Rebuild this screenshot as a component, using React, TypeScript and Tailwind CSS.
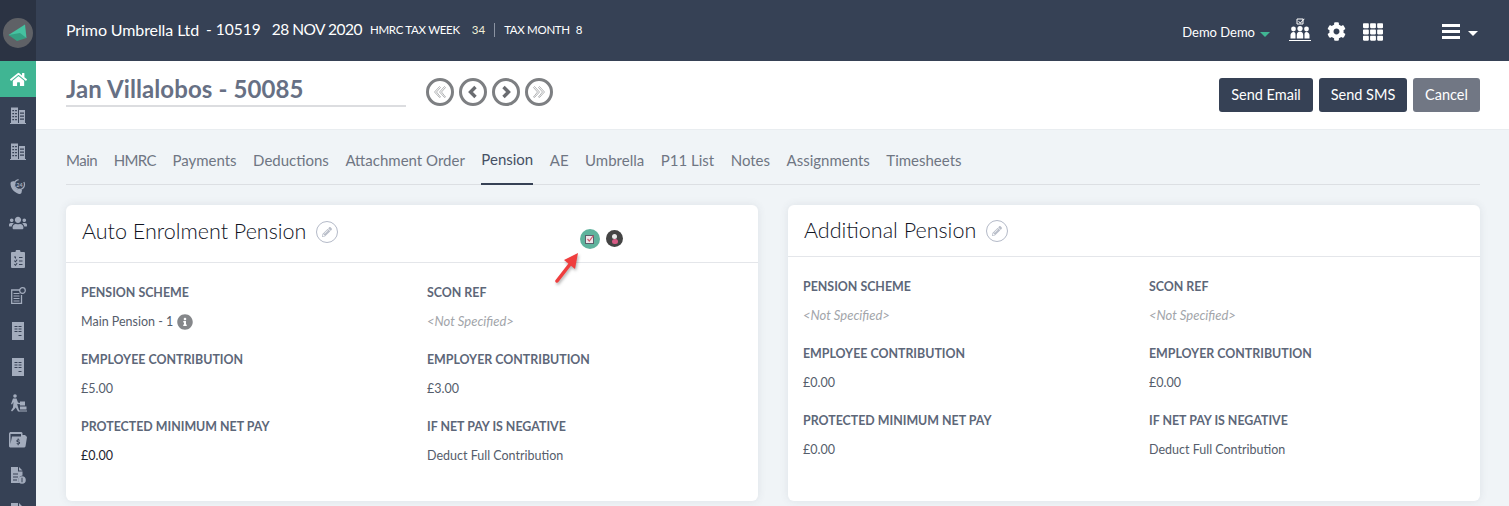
import React from "react";
import { FaHome, FaUsers, FaCog, FaTh, FaInfoCircle, FaPencilAlt } from "react-icons/fa";

const Building = () => (
  <svg width="16" height="18" viewBox="0 0 16 18" fill="#a3acbd">
    <path d="M0 17h16v1H0z" />
    <path fillRule="evenodd" d="M1 1.500h7V17H1zM2.300 4v1.300h1.800V4zm2.800 0v1.300h1.800V4zM2.300 7v1.300h1.800V7zm2.800 0v1.300h1.800V7zM2.300 10v1.300h1.800V10zm2.800 0v1.300h1.800V10zM2.300 13v1.300h1.800V13zm2.800 0v1.300h1.800V13z" />
    <path fillRule="evenodd" d="M9 4h6v13H9zM10 6.500v1.300h4V6.500zM10 9.500v1.300h4V9.500zM10 12.500v1.300h4v-1.300z" />
  </svg>
);
const Phone24 = () => (
  <svg width="18" height="18" viewBox="0 0 18 18" fill="none">
    <path d="M3 3.500 5.500 3l1.200 3-1.500 1.200c.5 2 1.800 3.600 3.600 4.600L10.300 10.500l2.700 1.500-.5 2.800c-.3 1-1.500 1.400-2.500 1.100C5 14.500 1.500 10.300 1.500 5.500c0-1 .6-1.800 1.500-2z" fill="#a3acbd" />
    <circle cx="10.500" cy="6.500" r="5" stroke="#a3acbd" strokeWidth="1.200" strokeDasharray="22 6" />
    <text x="10.500" y="8.500" fontSize="5.500" fontWeight="700" textAnchor="middle" fill="#a3acbd" fontFamily="Lato">24</text>
  </svg>
);
const Clipboard = () => (
  <svg width="14" height="18" viewBox="0 0 14 18" fill="#a3acbd">
    <path fillRule="evenodd" d="M1 2h3.500a2.500 2.500 0 0 1 5 0H13a1 1 0 0 1 1 1v14a1 1 0 0 1-1 1H1a1 1 0 0 1-1-1V3a1 1 0 0 1 1-1zM3 6.500v1h1v1h1V6.500zm5 .5v1h3.500V7zM3 11l1.500 1.500L6.500 10l-.7-.7L4.500 11l-.8-.7zM8 10.500v1h3.500v-1zM3 14.500l1.500 1.500 2-2.500-.7-.7-1.300 1.700-.8-.7zM8 14v1h3.500v-1z" />
  </svg>
);
const DocCoin = () => (
  <svg width="15" height="17" viewBox="0 0 15 17" fill="none" stroke="#a3acbd">
    <path d="M9 3H.7v13.300h9.800V8" strokeWidth="1.300" />
    <path d="M2.500 6.500h6M2.500 9h6M2.500 11.500h6M2.500 14h6" strokeWidth="1.200" />
    <circle cx="11.500" cy="3.500" r="2.800" strokeWidth="1.200" />
  </svg>
);
const Receipt = () => (
  <svg width="12" height="18" viewBox="0 0 12 18" fill="#a3acbd">
    <path fillRule="evenodd" d="M0 0h12v18H0zM2.500 4v1H5.500V4zm4 0v1h3V4zM2.500 6.500v1H5.500v-1zm4 0v1h3v-1zM2.500 9v1H5.500V9zm4 0v1h3V9zM6.500 13v1h3v-1z" />
  </svg>
);
const Porter = () => (
  <svg width="17" height="18" viewBox="0 0 17 18" fill="#a3acbd">
    <circle cx="5" cy="2" r="1.800" />
    <path d="M3 4.500h3.500l1.500 4 2 .6v1.200L7.200 10 8 13l1.500 4.500H8L5.800 13.500 4 15.500 2 17.500 1 16.500 3 13.500 3.500 8 2 10.500 1 10z" />
    <path d="M10 7.500h5v4h-5zM10 12.500h6.500v3H10z" />
    <path d="M9 16.500h8V17.500H9z" />
  </svg>
);
const Wallet = () => (
  <svg width="18" height="17" viewBox="0 0 18 17" fill="#a3acbd">
    <path fillRule="evenodd" d="M0 2.500 1 1h11.500l1 1v2H16l2 2-1.500 9.500-1 1H1l-1-1zM1.500 3v10L3 5.500h9V3zM9.700 7.500h-1v1c-.9.200-1.300.7-1.300 1.400 0 1.600 2.500 1.200 2.500 2 0 .5-1.300.4-2.200 0v1.100c.4.200.7.300 1 .3v1h1v-1c.9-.2 1.400-.8 1.400-1.500 0-1.600-2.500-1.300-2.500-2 0-.5 1-.4 2-.1V8.700a4 4 0 0 0-.9-.2z" />
  </svg>
);
const DocDollar = () => (
  <svg width="15" height="17" viewBox="0 0 15 17" fill="#a3acbd">
    <path fillRule="evenodd" d="M0 0h7v4.500h4.500v4a4.500 4.500 0 0 0-3 7.500H0zm8 0 3.500 3.500H8zM2 6.500v1h5v-1zm0 3v1h5v-1zm0 3v1h4v-1z" />
    <circle cx="11" cy="13" r="3.800" />
    <path d="M10.500 10.800h1v4.400h-1z" fill="#364155" />
  </svg>
);
const Team = () => (
  <svg width="22" height="28" viewBox="0 0 22 28" fill="#fff">
    <path d="M8 3h6v5H8z" fill="none" stroke="#fff" strokeWidth="1" />
    <path d="m9.800 5 1.500 1.500L15 2.500l.6.600-4.300 4.600L9.200 5.600z" />
    <circle cx="4.500" cy="13" r="2.400" />
    <circle cx="11" cy="12.500" r="2.600" />
    <circle cx="17.500" cy="13" r="2.400" />
    <path d="M1.500 22.500v-3.500c0-1.500 1.300-3 3-3s2 .8 2 3v3.500zM7.800 22.500V19c0-2 1.300-3.500 3.200-3.500s3.200 1.500 3.200 3.500v3.500zM15.500 22.500V19c0-2.200.4-3 2-3s3 1.500 3 3v3.500z" />
    <path d="M0 24h22v1H0z" />
  </svg>
);
const DoubleLeft = ({ flip }: { flip?: boolean }) => (
  <svg width="14" height="14" viewBox="0 0 14 14" fill="none" stroke="#a9abae" strokeWidth="0.900" style={flip ? { transform: "scaleX(-1)" } : undefined}>
    <path d="M6.500 1.500 1.500 7l5 5.500L7.500 12 3.500 7l4-4.500z" />
    <path d="M11.500 1.500 6.500 7l5 5.500 1-.5-4-5 4-4.500z" />
  </svg>
);
const Chevron = ({ flip }: { flip?: boolean }) => (
  <svg width="12" height="14" viewBox="0 0 12 14" fill="none" stroke="#6a6c70" strokeWidth="3.400" style={flip ? { transform: "scaleX(-1)" } : undefined}>
    <path d="M8.500 2 3.500 7l5 5" />
  </svg>
);

const nav = [Building, Building, Phone24, () => <FaUsers size={18} color="#a3acbd" />, Clipboard, DocCoin, Receipt, Receipt, Porter, Wallet, DocDollar, DocDollar];
const tabs = [
  { t: "Main", c: "tracking-[-0.5px]" },
  { t: "HMRC", c: "tracking-[-0.6px]" },
  { t: "Payments", c: "" },
  { t: "Deductions", c: "" },
  { t: "Attachment Order", c: "" },
  { t: "Pension", c: "border-b-2 border-[#364155] text-[#465064]" },
  { t: "AE", c: "" },
  { t: "Umbrella", c: "" },
  { t: "P11 List", c: "" },
  { t: "Notes", c: "" },
  { t: "Assignments", c: "" },
  { t: "Timesheets", c: "" },
];

const Circle = ({ children }: { children: React.ReactNode }) => (
  <div className="flex h-[28px] w-[28px] items-center justify-center rounded-full border-[3px] border-[#7d7f82]">{children}</div>
);

const Field = ({ label, value, muted, dark, info }: { label: string; value: string; muted?: boolean; dark?: boolean; info?: boolean }) => (
  <div className="h-[67px]">
    <div className="text-[12.400px] leading-[16px] font-bold text-[#5d6779]">{label}</div>
    <div className={`flex items-center gap-[4px] leading-[16px] ${muted ? "mt-[12px] text-[13px] text-[#a2a5aa] italic" : dark ? "mt-[13px] text-[12.500px] text-[#1d2330]" : "mt-[13px] text-[12.500px] text-[#555d6b]"}`}>
      {value}
      {info && <FaInfoCircle size={16} color="#85878a" />}
    </div>
  </div>
);

const Card = ({ title, headerH, children, badge }: { title: string; headerH: string; children: React.ReactNode; badge?: boolean }) => (
  <div className="relative h-[296px] flex-1 rounded-[6px] bg-white shadow-[0_0_8px_rgba(60,70,90,0.10)]">
    <div className={`flex items-center gap-[10px] border-b border-[#e4e6ea] pl-[16px] ${headerH}`}>
      <span className="text-[21.500px] font-light leading-none text-[#10141f]">{title}</span>
      <span className="flex h-[22px] w-[22px] items-center justify-center rounded-full border border-[#b4bac8] text-[#b9bec9]">
        <FaPencilAlt size={10} />
      </span>
    </div>
    {badge && (
      <>
        <div className="absolute left-[514px] top-[24px] flex h-[20px] w-[20px] items-center justify-center rounded-full bg-[#5fb39d]">
          <svg width="10" height="10" viewBox="0 0 10 10">
            <rect x="0.500" y="1.500" width="8" height="8" fill="#efe6ea" stroke="#5a5f6b" />
            <path d="M2.500 5 4.300 7 8.500 1.500" fill="none" stroke="#cf5a6e" strokeWidth="1.200" />
          </svg>
        </div>
        <div className="absolute left-[540px] top-[25px] flex h-[17px] w-[17px] flex-col items-center justify-center rounded-full bg-[#444444]">
          <div className="h-[5px] w-[5px] rounded-full bg-[#e8e8e8]" />
          <div className="h-[5px] w-[6px] rounded-full bg-[#d65a84]" />
        </div>
        <svg className="absolute left-[486px] top-[44px]" width="30" height="36" viewBox="0 0 30 36" style={{ filter: "drop-shadow(1px 2px 1.500px rgba(0,0,0,0.3))" }}>
          <path d="M5 32 L19 14" stroke="#ef3e3e" strokeWidth="3.500" strokeLinecap="round" />
          <path d="M26 4 L12 11 L23 20 Z" fill="#ef3e3e" />
        </svg>
      </>
    )}
    {children}
  </div>
);

const Grid = ({ rows, pt }: { rows: React.ReactNode; pt: string }) => (
  <div className={`grid grid-cols-[346px_1fr] pl-[15px] ${pt}`}>{rows}</div>
);

export default function App() {
  return (
    <div className="flex h-[506px] w-[1509px] overflow-hidden bg-[#f0f4f7] font-['Lato',sans-serif]">
      <aside className="flex h-[506px] w-[36px] shrink-0 flex-col overflow-hidden bg-[#364155]">
        <div className="flex h-[61px] shrink-0 items-center justify-center bg-[#2b3343] pt-[5px]">
          <div className="flex h-[30px] w-[30px] items-center justify-center rounded-full bg-[#5f6166]">
            <svg width="22" height="20" viewBox="0 0 22 20">
              <path d="M1.500 12 18 1.500 19.500 15z" fill="#45c2a0" />
              <path d="M1.500 12 13 10 19.500 15 10 18z" fill="#35a083" />
            </svg>
          </div>
        </div>
        <div className="flex h-[36px] shrink-0 items-center justify-center bg-[#40b593]">
          <FaHome size={17} color="#fff" />
        </div>
        {nav.map((Icon, i) => (
          <div key={i} className="flex h-[36px] shrink-0 items-center justify-center">
            <Icon />
          </div>
        ))}
      </aside>
      <div className="flex min-w-0 flex-1 flex-col">
        <header className="flex h-[61px] shrink-0 items-center bg-[#364155] pr-[31px] pl-[30px] text-white">
          <div className="flex items-center pb-[2px]">
            <span className="text-[16px] tracking-[-0.1px] whitespace-pre">Primo Umbrella Ltd</span>
            <span className="ml-[7px] text-[15.500px]">- 10519</span>
            <span className="ml-[11px] text-[15.500px] tracking-[-0.5px]">28 NOV 2020</span>
            <span className="ml-[8px] text-[11.500px] tracking-[-0.3px]">HMRC TAX WEEK</span>
            <span className="ml-[12px] text-[11.500px] text-[#f1efd8]">34</span>
            <span className="mx-[9px] h-[14px] w-px bg-[#8b93a2]" />
            <span className="text-[11.500px] tracking-[-0.3px]">TAX MONTH</span>
            <span className="ml-[6px] text-[11.500px]">8</span>
          </div>
          <div className="ml-auto flex items-center pt-[5px]">
            <span className="text-[13px]">Demo Demo</span>
            <span className="mt-[2px] ml-[5px] h-0 w-0 border-x-[5px] border-t-[5px] border-x-transparent border-t-[#40b593]" />
            <span className="-mt-[6px] ml-[19px]"><Team /></span>
            <FaCog size={19} className="-mt-[3px] ml-[16px]" />
            <FaTh size={20} className="-mt-[3px] ml-[17px]" />
            <div className="-mt-[3px] ml-[59px] flex flex-col gap-[3px]">
              <span className="h-[3px] w-[18px] bg-white" />
              <span className="h-[3px] w-[18px] bg-white" />
              <span className="h-[3px] w-[18px] bg-white" />
            </div>
            <span className="mt-[1px] ml-[8px] h-0 w-0 border-x-[5px] border-t-[5px] border-x-transparent border-t-white" />
          </div>
        </header>
        <div className="flex h-[69px] shrink-0 items-center border-b border-[#e9edf0] bg-white pr-[29px] pl-[30px]">
          <div className="-mt-[11px] flex h-[35px] w-[340px] items-center border-b-2 border-[#dcdde0] text-[24px] font-bold tracking-[0.1px] text-[#677084]">Jan Villalobos - 50085</div>
          <div className="-mt-[6px] ml-[20px] flex gap-[5px]">
            <Circle><DoubleLeft /></Circle>
            <Circle><Chevron /></Circle>
            <Circle><Chevron flip /></Circle>
            <Circle><DoubleLeft flip /></Circle>
          </div>
          <div className="ml-auto flex gap-[6px] text-[14.500px] text-white">
            <button className="h-[34px] w-[94px] rounded-[3px] bg-[#364155]">Send Email</button>
            <button className="h-[34px] w-[88px] rounded-[3px] bg-[#364155]">Send SMS</button>
            <button className="h-[34px] w-[67px] rounded-[3px] bg-[#717784]">Cancel</button>
          </div>
        </div>
        <main className="flex-1 pr-[29px] pl-[30px]">
          <nav className="mt-[13px] flex h-[42px] gap-[16.500px] border-b border-[#dcdfe3] text-[15px] text-[#6f7683]">
            {tabs.map(({ t, c }) => (
              <span key={t} className={`flex h-[42px] items-center pb-[7px] ${c}`}>{t}</span>
            ))}
          </nav>
          <div className="mt-[20px] flex gap-[30px]">
            <Card title="Auto Enrolment Pension" headerH="h-[58px] pb-[3px]" badge>
              <Grid pt="pt-[22px]" rows={<>
                <Field label="PENSION SCHEME" value="Main Pension - 1" info />
                <Field label="SCON REF" value="<Not Specified>" muted />
                <Field label="EMPLOYEE CONTRIBUTION" value="£5.00" />
                <Field label="EMPLOYER CONTRIBUTION" value="£3.00" />
                <Field label="PROTECTED MINIMUM NET PAY" value="£0.00" dark />
                <Field label="IF NET PAY IS NEGATIVE" value="Deduct Full Contribution" />
              </>} />
            </Card>
            <Card title="Additional Pension" headerH="h-[52px]">
              <Grid pt="pt-[22px]" rows={<>
                <Field label="PENSION SCHEME" value="<Not Specified>" muted />
                <Field label="SCON REF" value="<Not Specified>" muted />
                <Field label="EMPLOYEE CONTRIBUTION" value="£0.00" />
                <Field label="EMPLOYER CONTRIBUTION" value="£0.00" />
                <Field label="PROTECTED MINIMUM NET PAY" value="£0.00" />
                <Field label="IF NET PAY IS NEGATIVE" value="Deduct Full Contribution" />
              </>} />
            </Card>
          </div>
        </main>
      </div>
    </div>
  );
}
